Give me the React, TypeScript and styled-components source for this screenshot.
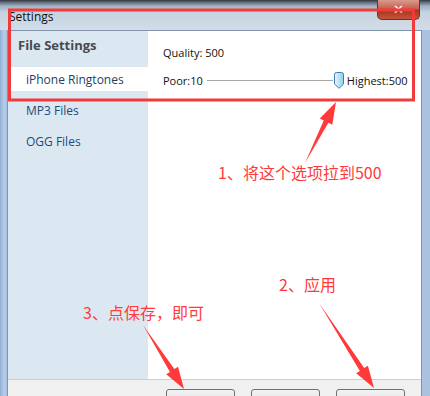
import React from "react";
import styled, { createGlobalStyle } from "styled-components";

const Global = createGlobalStyle`
  html, body { margin: 0; padding: 0; width: 430px; height: 396px; overflow: hidden; background: #2b2f33; }
  #root { width: 430px; height: 396px; }
`;

const Window = styled.div`
  position: relative;
  width: 430px;
  height: 396px;
  display: flex;
  flex-direction: column;
  overflow: hidden;
  background: linear-gradient(to right, #8fb0d6 0, #b7cde8 4px, #a6c0e0 8px, #c6d6e8 50%, #a9c2df 100%);
  font-family: "Open Sans", "Noto Sans", sans-serif;
`;

const TitleBar = styled.div`
  height: 30px;
  flex: none;
  display: flex;
  align-items: flex-start;
  justify-content: space-between;
  background: linear-gradient(to bottom, #30353b 0, #5b6672 2px, #9fb0c2 6px, #c5d2df 12px, #d2dde8 30px);
`;

const Title = styled.div`
  padding: 8px 0 0 9px;
  font-size: 12px;
  color: #111;
  font-family: "Open Sans", sans-serif;
`;

const CloseButton = styled.div`
  width: 43px;
  height: 20px;
  margin-right: 10px;
  box-sizing: border-box;
  border: 1px solid #6e2f26;
  border-top: none;
  border-radius: 0 0 5px 5px;
  background: linear-gradient(to bottom, #d89a8c 0, #c8604f 45%, #a8341f 55%, #c5553c 100%);
  color: #fff;
  font: bold 13px "DejaVu Sans", sans-serif;
  display: flex;
  align-items: center;
  justify-content: center;
  line-height: 1;
`;

const Client = styled.div`
  flex: 1;
  margin: 0 8px 0 7px;
  border: 1px solid #8194aa;
  border-bottom: none;
  display: flex;
  flex-direction: column;
  background: #fff;
  min-height: 0;
`;

const Body = styled.div`
  flex: 1;
  display: flex;
  min-height: 0;
`;

const Sidebar = styled.div`
  width: 140px;
  flex: none;
  background: #dce8f1;
  display: flex;
  flex-direction: column;
  gap: 7px;
`;

const SideHeader = styled.div`
  height: 29px;
  padding: 6px 0 0 10px;
  box-sizing: border-box;
  font-size: 13px;
  font-weight: 700;
  color: #474a4f;
  line-height: 16px;
`;

const SideItem = styled.div<{ $active?: boolean }>`
  height: 24px;
  padding-left: 18px;
  display: flex;
  align-items: center;
  font-size: 12px;
  color: ${(p) => (p.$active ? "#1c3f66" : "#1d4a78")};
  background: ${(p) => (p.$active ? "#ffffff" : "transparent")};
`;

const Main = styled.div`
  flex: 1;
  padding: 14px 0 0 15px;
  display: flex;
  flex-direction: column;
  gap: 11px;
  font-size: 11px;
  color: #111;
`;

const Label = styled.div`
  line-height: 16px;
`;

const SliderRow = styled.div`
  display: flex;
  align-items: center;
  height: 17px;
  line-height: 16px;
`;

const Track = styled.div`
  width: 126px;
  height: 1px;
  margin-left: 4px;
  background: #a7a7a7;
`;

const Thumb = styled.svg`
  width: 12px;
  height: 17px;
  margin-right: 2px;
  flex: none;
`;

const Footer = styled.div`
  height: 17px;
  box-sizing: border-box;
  overflow: hidden;
  flex: none;
  border-top: 1px solid #cfcfcf;
  background: #f0f0f0;
  display: flex;
  align-items: flex-start;
  gap: 16px;
  padding: 9px 0 0 158px;
`;

const Button = styled.div`
  width: 69px;
  height: 24px;
  box-sizing: border-box;
  border: 1px solid #707070;
  border-radius: 3px;
  background: linear-gradient(to bottom, #f2f2f2, #e6e6e6 50%, #dcdcdc);
  flex: none;
`;

const Overlay = styled.svg`
  position: absolute;
  left: 0;
  top: 0;
  width: 430px;
  height: 396px;
  pointer-events: none;
`;

const Note = styled.div<{ $x: number; $y: number }>`
  position: absolute;
  left: ${(p) => p.$x}px;
  top: ${(p) => p.$y}px;
  color: #ff3a3a;
  font-size: 16px;
  line-height: 18px;
  font-family: "Noto Sans CJK SC", "Liberation Sans", sans-serif;
  white-space: nowrap;
  letter-spacing: 0;
`;

function arrow(x1: number, y1: number, x2: number, y2: number) {
  const dx = x2 - x1;
  const dy = y2 - y1;
  const len = Math.hypot(dx, dy);
  const ux = dx / len;
  const uy = dy / len;
  const px = -uy;
  const py = ux;
  const headLen = 22;
  const headW = 7;
  const neckW = 2.6;
  const bx = x2 - ux * headLen;
  const by = y2 - uy * headLen;
  const pts = [
    [x1, y1],
    [bx + px * neckW, by + py * neckW],
    [bx + px * headW, by + py * headW],
    [x2, y2],
    [bx - px * headW, by - py * headW],
    [bx - px * neckW, by - py * neckW],
  ];
  return pts.map((p) => p.join(",")).join(" ");
}

export default function App() {
  return (
    <>
      <Global />
      <Window>
        <TitleBar>
          <Title>Settings</Title>
          <CloseButton>✕</CloseButton>
        </TitleBar>
        <Client>
          <Body>
            <Sidebar>
              <SideHeader>File Settings</SideHeader>
              <SideItem $active>iPhone Ringtones</SideItem>
              <SideItem>MP3 Files</SideItem>
              <SideItem>OGG Files</SideItem>
            </Sidebar>
            <Main>
              <Label>Quality: 500</Label>
              <SliderRow>
                <span>Poor:10</span>
                <Track />
                <Thumb viewBox="0 0 12 17">
                  <defs>
                    <linearGradient id="tg" x1="0" y1="0" x2="1" y2="0">
                      <stop offset="0" stopColor="#eaf7fd" />
                      <stop offset="1" stopColor="#8ccdee" />
                    </linearGradient>
                  </defs>
                  <path d="M1.5 2.5 Q1.5 0.5 3.5 0.5 H8.5 Q10.5 0.5 10.5 2.5 V12 L6 16.3 L1.5 12 Z" fill="url(#tg)" stroke="#3a7db3" strokeWidth="1" />
                </Thumb>
                <span>Highest:500</span>
              </SliderRow>
            </Main>
          </Body>
          <Footer>
            <Button />
            <Button />
            <Button />
          </Footer>
        </Client>
        <Overlay viewBox="0 0 430 396">
          <rect x="9.5" y="10" width="404" height="90" fill="none" stroke="#f23a3a" strokeWidth="3" />
          <polygon points={arrow(305, 163, 336, 102)} fill="#ff3a3a" />
          <polygon points={arrow(319, 303, 374, 388)} fill="#ff3a3a" />
          <polygon points={arrow(143, 325, 184, 389)} fill="#ff3a3a" />
        </Overlay>
        <Note $x={218} $y={163}>1、将这个选项拉到500</Note>
        <Note $x={279} $y={275}>2、应用</Note>
        <Note $x={83} $y={303}>3、点保存，即可</Note>
      </Window>
    </>
  );
}
